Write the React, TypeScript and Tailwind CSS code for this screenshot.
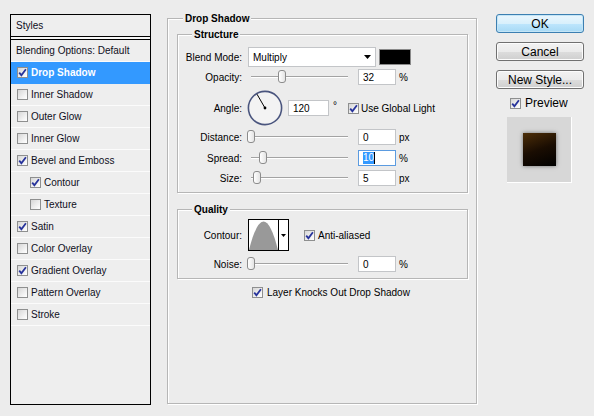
import clsx from "clsx";

type StyleItem = {
  label: string;
  checked?: boolean;
  selected?: boolean;
  indent?: boolean;
};

const styleItems: StyleItem[] = [
  { label: "Drop Shadow", checked: true, selected: true },
  { label: "Inner Shadow" },
  { label: "Outer Glow" },
  { label: "Inner Glow" },
  { label: "Bevel and Emboss", checked: true },
  { label: "Contour", checked: true, indent: true },
  { label: "Texture", indent: true },
  { label: "Satin", checked: true },
  { label: "Color Overlay" },
  { label: "Gradient Overlay", checked: true },
  { label: "Pattern Overlay" },
  { label: "Stroke" },
];

function Check({ checked }: { checked?: boolean }) {
  return (
    <span className="flex h-[11px] w-[11px] shrink-0 items-center justify-center border border-[#8e8f8f] bg-[linear-gradient(135deg,#d6d6d6,#f4f4f4_70%,#ffffff)]">
      {checked && (
        <svg width="9" height="9" viewBox="0 0 9 9">
          <path d="M1.2 4.6 L3.4 7.2 L7.9 1.2" fill="none" stroke="#27339b" strokeWidth="1.8" />
        </svg>
      )}
    </span>
  );
}

function Label({ children }: { children: React.ReactNode }) {
  return <span className="w-[64px] shrink-0 text-right">{children}</span>;
}

function Slider({ left }: { left: number }) {
  return (
    <div className="relative ml-[6px] h-[20px] w-[104px] shrink-0">
      <div className="absolute left-[3px] right-[4px] top-[9px] h-[2px] border-t border-[#a3a3a3] bg-white" />
      {/* thumb */}
      <div
        className="absolute top-[3px] h-[13px] w-[8px] rounded-[3px] border border-[#8c8c8c] bg-[linear-gradient(90deg,#ffffff,#e4e4e4)]"
        style={{ left }}
      />
    </div>
  );
}

function Field({ value, className, focus }: { value: string; className?: string; focus?: boolean }) {
  return (
    <div
      className={clsx(
        "flex h-[16px] shrink-0 items-center border bg-white pl-[4px]",
        focus ? "border-[#5b9be0]" : "border-[#c3c5c8]",
        className,
      )}
    >
      {focus ? (
        <>
          <span className="bg-[#3399ff] leading-[12px] text-white">{value}</span>
          <span className="h-[12px] w-px bg-black" />
        </>
      ) : (
        value
      )}
    </div>
  );
}

function SliderRow({ label, left, value, unit, focus }: { label: string; left: number; value: string; unit: string; focus?: boolean }) {
  return (
    <div className="flex h-[20px] items-center">
      <Label>{label}</Label>
      <Slider left={left} />
      <Field value={value} focus={focus} className="ml-[6px] w-[38px]" />
      <span className="ml-[3px]">{unit}</span>
    </div>
  );
}

function Dial() {
  return (
    <svg width="36" height="36" viewBox="0 0 36 36" className="ml-[5px] shrink-0">
      <circle cx="18" cy="18" r="16.6" fill="#f3f3f3" stroke="#4a557e" strokeWidth="1.6" />
      <line x1="18" y1="18" x2="10" y2="4.2" stroke="#000" strokeWidth="1" />
      <circle cx="18" cy="18" r="1.4" fill="#000" />
    </svg>
  );
}

function ContourPicker() {
  return (
    <div className="ml-[6px] flex h-[32px] w-[41px] shrink-0 border border-black bg-white">
      <svg width="29" height="30" viewBox="0 0 29 30" className="shrink-0">
        <path d="M0 30 Q14.5 -27 29 30 Z" fill="#999999" />
      </svg>
      <div className="flex flex-1 items-center justify-center border-l border-black">
        <svg width="5" height="3" viewBox="0 0 5 3">
          <path d="M0 0 H5 L2.5 3 Z" fill="#000" />
        </svg>
      </div>
    </div>
  );
}

function DialogButton({ children, primary }: { children: React.ReactNode; primary?: boolean }) {
  return (
    <button
      className={clsx(
        "h-[19px] w-[88px] rounded-[3px] border text-[12px] leading-none text-black",
        primary
          ? "border-[#3c7fb1] bg-[linear-gradient(#eaf6fd,#d9f0fc_50%,#bee6fd_51%,#a7d9f5)] shadow-[inset_0_0_0_1px_#c4e5f6]"
          : "border-[#707070] bg-[linear-gradient(#f2f2f2,#ebebeb_50%,#dddddd_51%,#cfcfcf)] shadow-[inset_0_0_0_1px_#fcfcfc]",
      )}
    >
      {children}
    </button>
  );
}

const groupBox =
  "border border-[#b6b6b6] shadow-[inset_1px_1px_0_#ffffff,1px_1px_0_#ffffff]";
const legend = "bg-[#ececec] px-[2px] font-bold leading-[13px]";

export default function App() {
  return (
    <div className="flex h-[416px] w-[594px] items-start bg-[#ececec] font-['Liberation_Sans',Arial,sans-serif] text-[10px] text-black">
      {/* styles list */}
      <div className="ml-[10px] mt-[14px] h-[391px] w-[141px] shrink-0 border border-black bg-[#eeeeee] text-[#0e0e22]">
        <div className="flex h-[22px] items-center border-b border-black pl-[5px]">Styles</div>
        <div className="h-[2px] bg-[#f6f6f6]" />
        <div className="border-t border-black">
          <div className="flex h-[22px] items-center border-b border-[#fbfbfb] pl-[5px]">
            Blending Options: Default
          </div>
          {styleItems.map((item) => (
            <div
              key={item.label}
              className={clsx(
                "flex h-[22px] items-center gap-[3px] border-b",
                item.indent ? "pl-[19px]" : "pl-[6px]",
                item.selected ? "border-[#3399ff] bg-[#3399ff] font-bold text-white" : "border-[#fbfbfb]",
              )}
            >
              <Check checked={item.checked} />
              <span>{item.label}</span>
            </div>
          ))}
        </div>
      </div>

      {/* drop shadow settings */}
      <fieldset className={clsx("ml-[16px] mt-[12px] h-[392px] w-[310px] shrink-0", groupBox)}>
        <legend className={clsx("ml-[15px]", legend)}>Drop Shadow</legend>

        <fieldset className={clsx("ml-[9px] mt-[3px] w-[291px] pb-[4px] pt-[6px]", groupBox)}>
          <legend className={clsx("ml-[14px]", legend)}>Structure</legend>

          <div className="flex h-[20px] items-center">
            <Label>Blend Mode:</Label>
            <div className="ml-[6px] flex h-[20px] w-[128px] items-center justify-between border border-[#c3c5c8] bg-white pl-[4px] pr-[4px]">
              <span>Multiply</span>
              <svg width="7" height="4" viewBox="0 0 7 4">
                <path d="M0 0 H7 L3.5 4 Z" fill="#000" />
              </svg>
            </div>
            <div className="ml-[3px] h-[16px] w-[32px] border border-[#8a8a8a] bg-black" />
          </div>

          <SliderRow label="Opacity:" left={30} value="32" unit="%" />

          <div className="mt-[3px] flex h-[36px] items-center">
            <Label>Angle:</Label>
            <Dial />
            <Field value="120" className="ml-[5px] w-[41px]" />
            <span className="w-[15px] self-start pl-[4px] pt-[8px]">°</span>
            <span className="ml-[4px] flex items-center gap-[2px]">
              <Check checked />
              Use Global Light
            </span>
          </div>

          <div className="mt-px">
            <SliderRow label="Distance:" left={-1} value="0" unit="px" />
          </div>
          <div className="mt-px">
            <SliderRow label="Spread:" left={11} value="10" unit="%" focus />
          </div>
          <SliderRow label="Size:" left={5} value="5" unit="px" />
        </fieldset>

        <fieldset className={clsx("ml-[9px] mt-[10px] w-[291px] pb-[4px] pt-[3px]", groupBox)}>
          <legend className={clsx("ml-[14px]", legend)}>Quality</legend>
          <div className="flex h-[32px] items-center">
            <Label>Contour:</Label>
            <ContourPicker />
            <span className="ml-[15px] flex items-center gap-[3px]">
              <Check checked />
              Anti-aliased
            </span>
          </div>
          <div className="mt-[3px]">
            <SliderRow label="Noise:" left={-1} value="0" unit="%" />
          </div>
        </fieldset>

        <div className="ml-[84px] mt-[5px] flex h-[16px] items-center gap-[4px]">
          <Check checked />
          Layer Knocks Out Drop Shadow
        </div>
      </fieldset>

      {/* dialog actions */}
      <div className="ml-[19px] mt-[14px] flex w-[88px] shrink-0 flex-col">
        <DialogButton primary>OK</DialogButton>
        <div className="mt-[9px]">
          <DialogButton>Cancel</DialogButton>
        </div>
        <div className="mt-[9px]">
          <DialogButton>New Style...</DialogButton>
        </div>
        <div className="ml-[14px] mt-[7px] flex h-[14px] items-center gap-[4px] text-[12px]">
          <Check checked />
          Preview
        </div>
        <div className="ml-[11px] mt-[7px] flex h-[66px] w-[65px] items-center justify-center border-b border-r border-white bg-[#d7d7d7]">
          <div className="h-[33px] w-[33px] bg-[linear-gradient(160deg,#4d2e08,#1a0d02_50%,#000000)] shadow-[0_0_4px_rgba(0,0,0,0.5)]" />
        </div>
      </div>
    </div>
  );
}
